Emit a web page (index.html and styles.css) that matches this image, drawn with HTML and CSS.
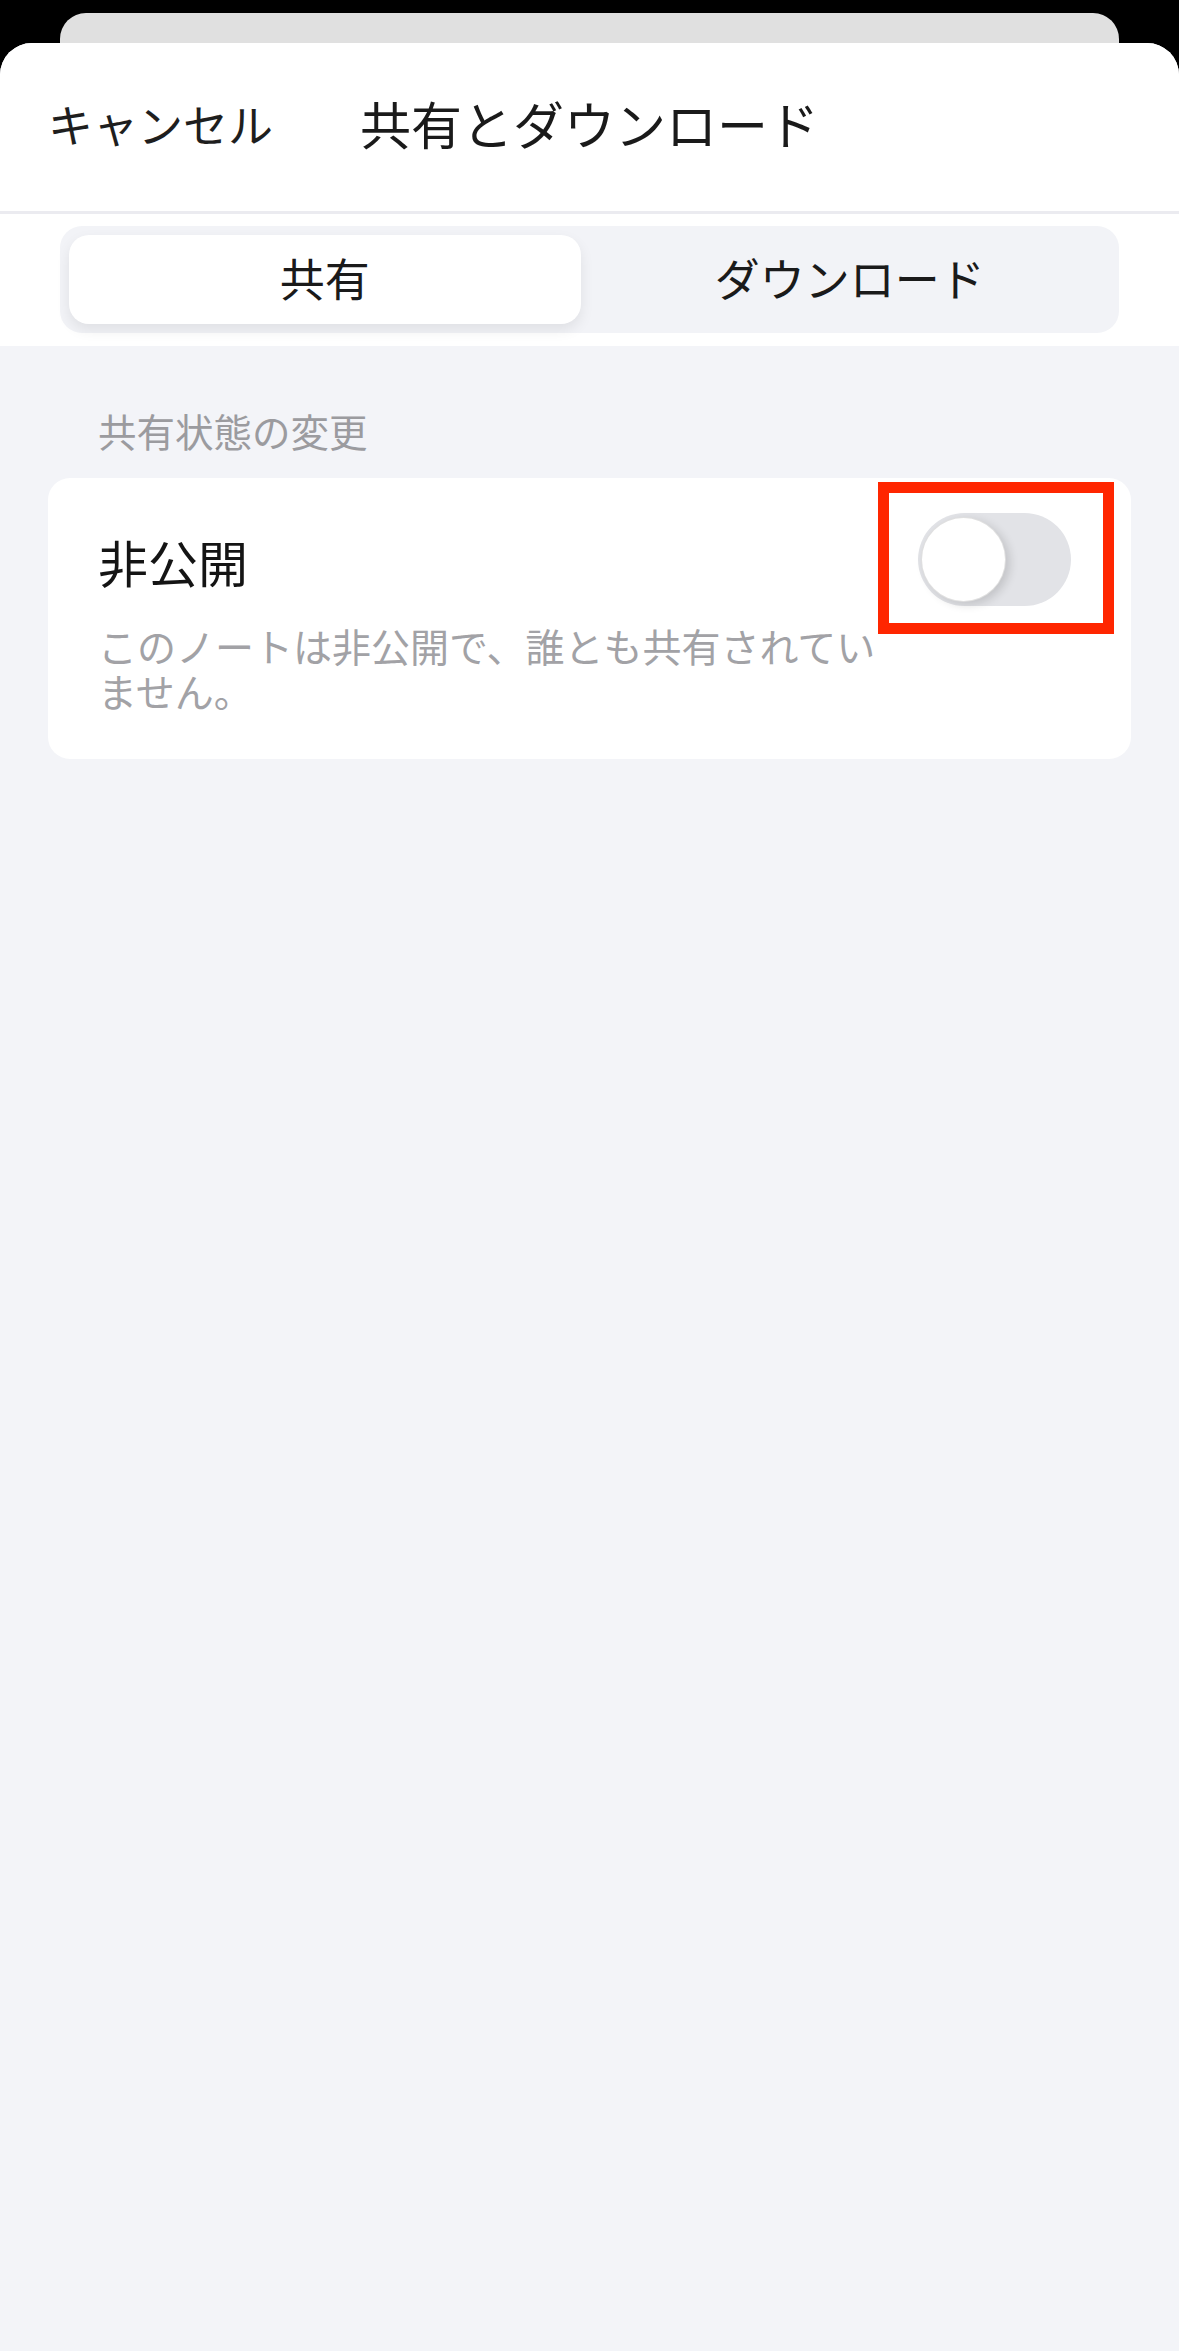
FILE: index.html
```html
<!DOCTYPE html>
<html lang="ja">
<head>
<meta charset="utf-8">
<title>共有とダウンロード</title>
<link rel="stylesheet" href="styles.css">
</head>
<body>
<div class="backcard"></div>
<div class="sheet">
  <header class="header">
    <div class="cancel">キャンセル</div>
    <div class="title">共有とダウンロード</div>
    <div></div>
  </header>
  <div class="seg-wrap">
    <div class="seg">
      <div class="seg-item active">共有</div>
      <div class="seg-item">ダウンロード</div>
    </div>
  </div>
  <main class="content">
    <div class="section-label">共有状態の変更</div>
    <div class="card">
      <div class="card-text">
        <div class="card-title">非公開</div>
        <div class="card-desc">このノートは非公開で、誰とも共有されていません。</div>
      </div>
      <div class="toggle"><div class="knob"></div></div>
      <div class="highlight"></div>
    </div>
  </main>
</div>
</body>
</html>
```
FILE: styles.css
```css
* { box-sizing: border-box; }
html, body {
  margin: 0;
  padding: 0;
}
body {
  background: #000;
  font-family: "Noto Sans CJK JP", "Noto Sans", sans-serif;
  color: #1a1a1a;
}
.backcard {
  margin: 13px 60px 0;
  height: 30px;
  background: #e0e0e0;
  border-radius: 26px 26px 0 0;
}
.sheet {
  background: #f3f4f8;
  border-radius: 32px 32px 0 0;
  overflow: hidden;
  min-height: 2308px;
}
.header {
  background: #fff;
  padding: 0 48px 6px 48px;
  display: grid;
  grid-template-columns: 1fr auto 1fr;
  align-items: center;
  border-bottom: 3px solid #ebebf0;
  height: 171px;
}
.cancel {
  font-size: 45px;
  line-height: 1.2;
  color: #1e1e1e;
}
.title {
  font-size: 51px;
  line-height: 1.2;
  color: #1a1a1a;
}
.seg-wrap {
  background: #fff;
  padding: 12px 60px 13px;
}
.seg {
  background: #f2f3f7;
  border-radius: 22px;
  height: 107px;
  padding: 9px;
  display: grid;
  grid-template-columns: 1fr 1fr;
}
.seg-item {
  display: flex;
  align-items: center;
  justify-content: center;
  font-size: 45px;
  line-height: 1.2;
  padding-bottom: 4px;
  color: #1a1a1a;
  border-radius: 20px;
}
.seg-item.active {
  background: #fff;
  margin-right: 9px;
  box-shadow: 0 6px 14px rgba(0, 0, 0, 0.08);
}
.content {
  padding: 61px 48px 0;
}
.section-label {
  padding-left: 50px;
  font-size: 38.5px;
  line-height: 46px;
  color: #9b9b9f;
  margin-bottom: 25px;
}
.card {
  position: relative;
  background: #fff;
  border-radius: 22px;
  padding: 35px 60px 46px 50px;
  display: flex;
  justify-content: space-between;
  align-items: flex-start;
}
.card-text {
  padding-top: 18px;
}
.card-title {
  font-size: 50px;
  line-height: 60px;
  color: #141414;
  margin-bottom: 32px;
}
.card-desc {
  max-width: 790px;
  font-size: 39px;
  line-height: 45px;
  color: #a2a2a6;
}
.toggle {
  flex: none;
  width: 153px;
  height: 93px;
  border-radius: 47px;
  background: #e2e3e7;
  position: relative;
}
.knob {
  position: absolute;
  left: 3px;
  top: 4px;
  width: 85px;
  height: 85px;
  border-radius: 50%;
  background: #fff;
  border: 1.5px solid rgba(0, 0, 0, 0.12);
  box-shadow: 4px 3px 10px rgba(0, 0, 0, 0.14);
}
.highlight {
  position: absolute;
  left: 830px;
  top: 4px;
  width: 236px;
  height: 152px;
  border: 11px solid #ff2600;
}
```
